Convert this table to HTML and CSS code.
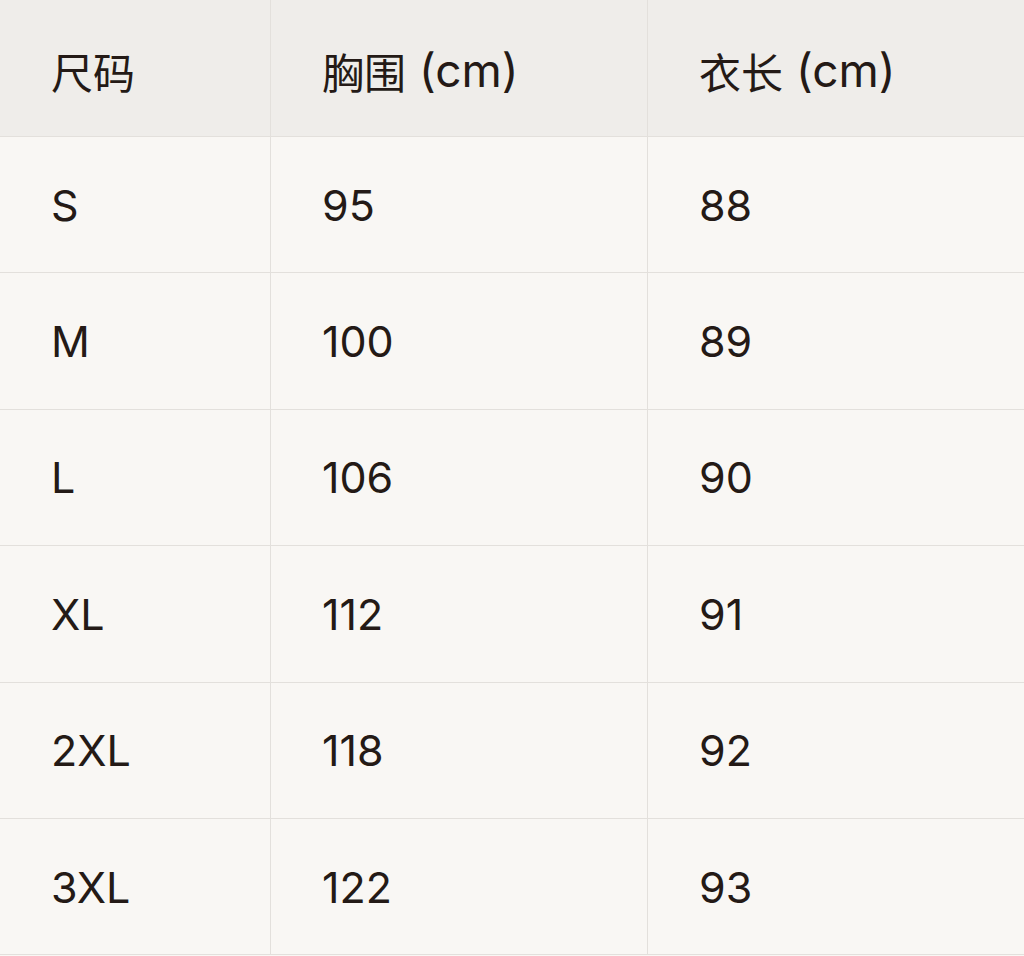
FILE: index.html
```html
<!DOCTYPE html>
<html lang="zh">
<head>
<meta charset="utf-8">
<title>尺码表</title>
<link rel="stylesheet" href="styles.css">
</head>
<body>
<div class="size-table">
  <div class="cell head"><span class="cjk">尺码</span></div>
  <div class="cell head"><span class="cjk">胸围</span> (cm)</div>
  <div class="cell head last"><span class="cjk">衣长</span> (cm)</div>

  <div class="cell">S</div>
  <div class="cell">95</div>
  <div class="cell last">88</div>

  <div class="cell">M</div>
  <div class="cell">100</div>
  <div class="cell last">89</div>

  <div class="cell">L</div>
  <div class="cell">106</div>
  <div class="cell last">90</div>

  <div class="cell">XL</div>
  <div class="cell">112</div>
  <div class="cell last">91</div>

  <div class="cell">2XL</div>
  <div class="cell">118</div>
  <div class="cell last">92</div>

  <div class="cell">3XL</div>
  <div class="cell">122</div>
  <div class="cell last">93</div>
</div>
</body>
</html>
```
FILE: styles.css
```css
html, body {
  margin: 0;
  padding: 0;
  background: #f9f7f4;
}
.size-table {
  display: grid;
  grid-template-columns: 271px 377px 1fr;
  grid-template-rows: 137px;
  grid-auto-rows: 136.4px;
  width: 1024px;
  font-family: Inter, "Noto Sans CJK SC", sans-serif;
  font-size: 43px;
  color: #241a16;
  background: #f9f7f4;
}
.cell {
  box-sizing: border-box;
  display: flex;
  align-items: center;
  white-space: pre;
  padding-left: 51px;
  border-right: 1px solid #e3e0dc;
  border-bottom: 1px solid #e3e0dc;
}
.cell.last {
  border-right: none;
}
.cell.head {
  background: #efedea;
  font-size: 46px;
  padding-top: 4px;
}
.cjk {
  font-family: "Noto Sans CJK SC", sans-serif;
  font-size: 42px;
}
```
